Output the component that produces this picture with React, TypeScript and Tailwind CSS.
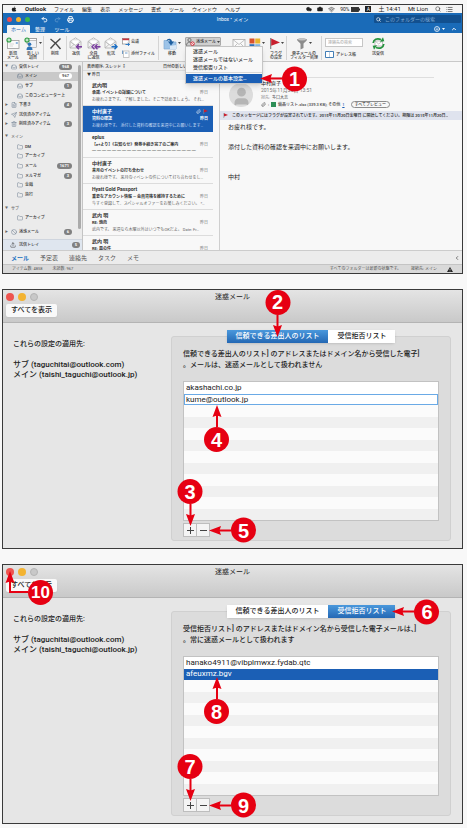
import type { ReactNode } from 'react';
import {
  Ban,
  Camera,
  ChevronLeft,
  ChevronUp,
  Cloud,
  FileText,
  Folder,
  Inbox,
  List,
  Paperclip,
  Printer,
  Redo2,
  Search,
  Send,
  Smile,
  Trash2,
  Undo2,
  Upload,
  User,
  Wifi,
} from 'lucide-react';
import { FaApple } from 'react-icons/fa';

type Direction = 'up' | 'down' | 'left';

function Badge({ n }: { n: number }) {
  return (
    <span
      className={`flex size-[25px] shrink-0 items-center justify-center rounded-full bg-[#e60012] font-['Liberation_Sans_Narrow','Liberation_Sans',sans-serif] leading-none font-bold text-white ${
        n > 9 ? 'text-[17px]' : 'text-[20px]'
      }`}
    >
      {n}
    </span>
  );
}

function Arrow({ dir }: { dir: Direction }) {
  if (dir === 'left') {
    return (
      <svg width="22" height="10" viewBox="0 0 22 10" className="shrink-0">
        <path d="M8 5H22" stroke="#e60012" strokeWidth="2" />
        <path d="M0 5L12 0.500L10.500 5L12 9.500Z" fill="#e60012" />
      </svg>
    );
  }
  return (
    <svg width="10" height="22" viewBox="0 0 10 22" className="shrink-0">
      {dir === 'down' ? (
        <>
          <path d="M5 0V14" stroke="#e60012" strokeWidth="2" />
          <path d="M5 22L0.500 10L5 11.500L9.500 10Z" fill="#e60012" />
        </>
      ) : (
        <>
          <path d="M5 8V22" stroke="#e60012" strokeWidth="2" />
          <path d="M5 0L0.500 12L5 10.500L9.500 12Z" fill="#e60012" />
        </>
      )}
    </svg>
  );
}

const calloutFlow = {
  up: 'flex-col',
  down: 'flex-col-reverse',
  left: 'flex-row',
};

// numbered step, placed over the control it points at
function Callout({ n, dir, className }: { n: number; dir: Direction; className: string }) {
  return (
    <span className={`pointer-events-none absolute z-20 flex items-center ${calloutFlow[dir]} ${className}`}>
      <Arrow dir={dir} />
      <Badge n={n} />
    </span>
  );
}

function Caret() {
  return <svg width="3" height="2" viewBox="0 0 3 2" className="shrink-0"><path d="M0 0H3L1.500 2Z" fill="#444" /></svg>;
}

function Flag({ size = 5 }: { size?: number }) {
  return (
    <svg width={size} height={size} viewBox="0 0 10 10">
      <path d="M1.500 0V10" stroke="#8d8d8d" strokeWidth="1.200" />
      <path d="M2 0.500L10 4L2 7Z" fill="#c8202f" />
    </svg>
  );
}

/* ---------- ribbon icons ---------- */

function PlusDot() {
  return (
    <g>
      <circle cx="3" cy="3" r="2.600" fill="#2f9e44" />
      <path d="M3 1.500V4.500M1.500 3H4.500" stroke="#fff" strokeWidth="0.900" />
    </g>
  );
}

function NewMailIcon() {
  return (
    <svg width="14" height="13" viewBox="0 0 14 13">
      <rect x="1.500" y="3.500" width="11.500" height="8" fill="#fafafa" stroke="#9a9a9a" strokeWidth="0.800" />
      <path d="M3.500 7H8M3.500 9H7" stroke="#c9c9c9" strokeWidth="0.700" />
      <rect x="9.800" y="5" width="2" height="2" fill="#8fb5dc" />
      <PlusDot />
    </svg>
  );
}

function NewItemIcon() {
  return (
    <svg width="14" height="13" viewBox="0 0 14 13">
      <rect x="3" y="1.500" width="9.500" height="5" fill="#fff" stroke="#8c8c8c" strokeWidth="0.800" />
      <rect x="5" y="3.500" width="7.500" height="7" fill="#eef2f7" stroke="#9a9a9a" strokeWidth="0.600" />
      <circle cx="5.500" cy="7.200" r="1.800" fill="#2b73b8" />
      <path d="M2.500 13C2.500 10.500 3.800 9.600 5.500 9.600S8.500 10.500 8.500 13Z" fill="#2b73b8" />
      <PlusDot />
    </svg>
  );
}

function DeleteIcon() {
  return (
    <svg width="13" height="13" viewBox="0 0 13 13">
      <path d="M1.500 2C5 4.500 8.500 8 11.500 12M11.500 1.500C8 4.500 4.500 8 1.500 11.500" stroke="#4a4a4a" strokeWidth="1.500" fill="none" />
    </svg>
  );
}

function OpenMail({ children }: { children: ReactNode }) {
  return (
    <svg width="14" height="13" viewBox="0 0 14 13">
      <path d="M1 4.500L6.500 0.800L12 4.500V11H1Z" fill="#f4f4f4" stroke="#b0b0b0" strokeWidth="0.800" />
      <path d="M2.800 2.800H10.200V6L6.500 8L2.800 6Z" fill="#fff" stroke="#c8c8c8" strokeWidth="0.600" />
      <path d="M1 4.500L6.500 8.500L12 4.500M1 11L5 7.500M12 11L8 7.500" fill="none" stroke="#b0b0b0" strokeWidth="0.700" />
      {children}
    </svg>
  );
}

function ReplyIcon() {
  return (
    <OpenMail>
      <path d="M7.500 9.800H13M10 7.300L7.500 9.800L10 12.300" fill="none" stroke="#7b3fa0" strokeWidth="1.500" />
    </OpenMail>
  );
}

function ReplyAllIcon() {
  return (
    <OpenMail>
      <path d="M8.500 9.800H13.500M10.500 7.300L8 9.800L10.500 12.300M7.500 7.300L5 9.800L7.500 12.300" fill="none" stroke="#7b3fa0" strokeWidth="1.400" />
    </OpenMail>
  );
}

function ForwardIcon() {
  return (
    <OpenMail>
      <path d="M7.500 9.800H13M10.500 7.300L13 9.800L10.500 12.300" fill="none" stroke="#1c6fc4" strokeWidth="1.500" />
    </OpenMail>
  );
}

function MeetingIcon() {
  return (
    <svg width="8" height="8" viewBox="0 0 8 8" className="shrink-0">
      <rect x="0.500" y="0.500" width="6.500" height="5.500" fill="#fff" stroke="#8a8a8a" strokeWidth="0.700" />
      <rect x="0.500" y="0.500" width="6.500" height="1.700" fill="#c8323c" />
      <path d="M3.500 6.500H7.500M5.800 5L7.500 6.500L5.800 8" fill="none" stroke="#1c6fc4" strokeWidth="0.900" />
    </svg>
  );
}

function AttachIcon() {
  return (
    <svg width="8" height="8" viewBox="0 0 8 8" className="shrink-0">
      <rect x="1.500" y="1" width="5.500" height="6.500" fill="#fff" stroke="#b0b0b0" strokeWidth="0.700" />
      <path d="M0.500 0.500V4M3 3H5.500" stroke="#4f86bd" strokeWidth="0.800" />
    </svg>
  );
}

function MoveIcon() {
  return (
    <svg width="14" height="13" viewBox="0 0 14 13">
      <path d="M1 3.500H5L6.500 5H13V12H1Z" fill="#9cc3e8" stroke="#7fabd4" strokeWidth="0.700" />
      <path d="M7 12H13V8L7 9Z" fill="#d9e8f6" />
      <path d="M3.500 4C4 1.200 8.500 0.500 9 4.500H11L8 8.500L5 4.500H7C6.700 2.800 5 2.800 3.500 4Z" fill="#1f5f9f" />
    </svg>
  );
}

function JunkIcon() {
  return (
    <svg width="9" height="8" viewBox="0 0 9 8" className="shrink-0">
      <circle cx="3.500" cy="2" r="1.600" fill="none" stroke="#555" strokeWidth="0.700" />
      <path d="M0.500 7.500C0.500 5 2 4.200 3.500 4.200C4.500 4.200 5.300 4.500 5.800 5" fill="none" stroke="#555" strokeWidth="0.700" />
      <circle cx="6.500" cy="5.700" r="1.800" fill="#fff" stroke="#cf2331" strokeWidth="0.900" />
      <path d="M5.300 4.500L7.700 6.900" stroke="#cf2331" strokeWidth="0.800" />
    </svg>
  );
}

function ClosedMailIcon() {
  return (
    <svg width="14" height="13" viewBox="0 0 14 13">
      <rect x="1" y="2.500" width="12" height="8.500" fill="#fafafa" stroke="#ababab" strokeWidth="0.800" />
      <path d="M1 2.500L7 7.500L13 2.500M1 11L5.500 6.500M13 11L8.500 6.500" fill="none" stroke="#ababab" strokeWidth="0.700" />
    </svg>
  );
}

function CategoryIcon() {
  return (
    <svg width="12" height="13" viewBox="0 0 12 13">
      <rect x="0.500" y="1.500" width="5" height="5" fill="#d9532c" />
      <rect x="6.200" y="1.500" width="5" height="5" fill="#e9b32d" />
      <rect x="0.500" y="7.200" width="5" height="5" fill="#2c6fb8" />
      <rect x="6.200" y="7.200" width="5" height="5" fill="#7fb2e0" />
    </svg>
  );
}

function FunnelIcon() {
  return (
    <svg width="12" height="13" viewBox="0 0 12 13">
      <path d="M1 2.500C1 1 11 1 11 2.500C11 4 7.500 6 7.500 7V11L4.500 12.500V7C4.500 6 1 4 1 2.500Z" fill="#8b8b8b" />
      <ellipse cx="6" cy="2.600" rx="4" ry="0.900" fill="#c4c4c4" />
    </svg>
  );
}

function BookIcon() {
  return (
    <svg width="9" height="7" viewBox="0 0 9 7" className="shrink-0">
      <path d="M0.500 0.500H8.500V6.500H0.500Z" fill="#fff" stroke="#2e6fae" strokeWidth="0.900" />
      <path d="M4.500 0.500V6" stroke="#9db9d5" strokeWidth="0.700" />
    </svg>
  );
}

function SyncIcon() {
  return (
    <svg width="13" height="13" viewBox="0 0 13 13">
      <rect x="3" y="4" width="7.500" height="5" fill="#fff" stroke="#a5a5a5" strokeWidth="0.700" />
      <path d="M3 4L6.700 7L10.500 4" fill="none" stroke="#a5a5a5" strokeWidth="0.600" />
      <path d="M1.200 6C1.500 2.500 5 0.800 9 2.500" fill="none" stroke="#23933d" strokeWidth="1.700" />
      <path d="M8 4.800L12.300 4.300L11 0.200Z" fill="#23933d" />
      <path d="M11.800 7C11.500 10.500 8 12.200 4 10.500" fill="none" stroke="#23933d" strokeWidth="1.700" />
      <path d="M5 8.200L0.700 8.700L2 12.800Z" fill="#23933d" />
    </svg>
  );
}

function RibbonButton({ icon, label, className, caret }: { icon: ReactNode; label: string[]; className: string; caret?: boolean }) {
  return (
    <button type="button" className={`flex shrink-0 flex-col items-center whitespace-nowrap ${className}`}>
      <span className="flex h-[14px] items-center gap-px">
        {icon}
        {caret && <Caret />}
      </span>
      <span className="mt-[2px] h-[8px] leading-[4px]">
        {label.map(line => (
          <span key={line} className="block">{line}</span>
        ))}
      </span>
    </button>
  );
}

function Separator() {
  return <span className="h-[24px] w-px shrink-0 bg-[#d4d4d4]" />;
}

/* ---------- mail window ---------- */

const menus = ['ファイル', '編集', '表示', 'メッセージ', '書式', 'ツール', 'ウインドウ', 'ヘルプ'];
const junkItems = ['迷惑メール', '迷惑メールではないメール', '受信拒否リスト'];

function MenuBar() {
  return (
    <div className="flex h-[8px] items-center justify-between bg-[#f4f4f4] pr-[9px] pl-[8px] text-[5px] leading-[8px] whitespace-nowrap text-[#222]">
      <div className="flex items-center gap-[8px]">
        <FaApple size={6} />
        <span className="text-[6px] font-bold">Outlook</span>
        {menus.map(m => <span key={m}>{m}</span>)}
      </div>
      <div className="flex items-center gap-[5px]">
        <Cloud size={6} fill="#222" />
        <Camera size={6} fill="#222" />
        <Wifi size={7} />
        <span className="flex items-center gap-[2px]">
          90%
          <svg width="9" height="5" viewBox="0 0 9 5">
            <rect x="0.500" y="0.500" width="7" height="4" fill="#333" stroke="#222" strokeWidth="0.800" />
            <path d="M8.500 1.500V3.500" stroke="#222" />
          </svg>
        </span>
        <span className="flex size-[6px] items-center justify-center bg-[#222] text-[5px] leading-none text-white">A</span>
        <span className="ml-[2px] text-[6px]">土 14:41</span>
        <span className="ml-[2px] text-[6px]">Mt Lion</span>
        <Search size={6} className="ml-[2px]" />
        <List size={7} />
      </div>
    </div>
  );
}

function TitleBar() {
  return (
    <div className="h-[20px] bg-[#1a6bb8] text-white">
      <div className="grid h-[12px] grid-cols-[1fr_auto_1fr] items-center text-[5px]">
        <div className="flex items-center gap-[4px] pl-[4px]">
          <span className="size-[5px] rounded-full bg-[#ee4b4b]" />
          <span className="size-[5px] rounded-full bg-[#f5b12e]" />
          <span className="size-[5px] rounded-full bg-[#39b54a]" />
          <Undo2 size={7} strokeWidth={3} className="ml-[7px]" />
          <Redo2 size={7} className="ml-[2px] opacity-40" />
          <Printer size={7} strokeWidth={3} className="ml-[2px]" />
        </div>
        <span className="leading-none">Inbox • メイン</span>
        <label className="mr-px flex h-[8px] w-[87px] items-center gap-[4px] justify-self-end rounded-[1px] bg-[#12508f] px-[2px]">
          <Search size={5} strokeWidth={3} />
          <input
            aria-label="フォルダーの検索"
            placeholder="このフォルダーの検索"
            className="min-w-0 flex-1 leading-none outline-none placeholder:text-[#7fa9d4]"
          />
        </label>
      </div>
      <div className="flex h-[8px] items-center justify-between pl-[4px] text-[5px] leading-[8px]">
        <div className="flex">
          <button type="button" className="w-[23px] rounded-t-[1px] bg-[#f4f4f4] text-[#1a6bb8]">ホーム</button>
          <button type="button" className="w-[20px]">整理</button>
          <button type="button" className="ml-[2px] w-[20px]">ツール</button>
        </div>
        <div className="flex items-center gap-[6px] pr-[5px]">
          <span className="flex items-center gap-[2px]">
            <Smile size={6} strokeWidth={3} />
            <svg width="3" height="2" viewBox="0 0 3 2"><path d="M0 0H3L1.500 2Z" fill="#fff" /></svg>
          </span>
          <ChevronUp size={6} strokeWidth={4} />
        </div>
      </div>
    </div>
  );
}

function JunkMenu() {
  return (
    <div className="relative w-[36px] shrink-0 self-start pt-[2px]">
      <button type="button" className="flex h-[9px] w-full items-center justify-center gap-px rounded-[1px] border border-[#a9a9a9] bg-[#cfcfcf] whitespace-nowrap">
        <JunkIcon />
        迷惑メール
        <Caret />
      </button>
      <div className="absolute top-full left-0 z-10 w-[78px] border border-[#c6c6c6] bg-[#f8f8f8] text-[5px] leading-[8px] whitespace-nowrap shadow-md">
        {junkItems.map(item => (
          <button key={item} type="button" className="block w-full pl-[7px] text-left">{item}</button>
        ))}
        <div className="my-px h-px bg-[#d8d8d8]" />
        <div className="relative">
          <button type="button" className="block w-full bg-[#1b5fb5] pl-[7px] text-left leading-[9px] text-white">
            迷惑メールの基本設定…
          </button>
          <Callout n={1} dir="left" className="top-1/2 left-full -ml-[2px] -translate-y-1/2" />
        </div>
      </div>
    </div>
  );
}

function Ribbon() {
  return (
    <div className="flex h-[29px] items-center border-b border-[#c9c9c9] bg-[#f4f4f4] pt-[2px] text-[4px] leading-[4px] font-medium text-[#333]">
      <RibbonButton icon={<NewMailIcon />} label={['新規', 'メール']} className="w-[20px]" />
      <RibbonButton icon={<NewItemIcon />} label={['新しい', '項目']} className="w-[20px]" caret />
      <Separator />
      <RibbonButton icon={<DeleteIcon />} label={['削除']} className="w-[22px]" />
      <Separator />
      <RibbonButton icon={<ReplyIcon />} label={['返信']} className="w-[18px]" />
      <RibbonButton icon={<ReplyAllIcon />} label={['全員', 'に返信']} className="w-[17px]" />
      <RibbonButton icon={<ForwardIcon />} label={['転送']} className="w-[18px]" />
      <div className="flex w-[38px] shrink-0 flex-col gap-[4px] pl-[2px]">
        <button type="button" className="flex items-center gap-px"><MeetingIcon />会議</button>
        <button type="button" className="flex items-center gap-px whitespace-nowrap"><AttachIcon />添付ファイル</button>
      </div>
      <Separator />
      <RibbonButton icon={<MoveIcon />} label={['移動']} className="w-[26px]" caret />
      <JunkMenu />
      <div className="ml-[8px] flex">
        <RibbonButton icon={<ClosedMailIcon />} label={['未読']} className="w-[19px]" />
        <RibbonButton icon={<CategoryIcon />} label={['分類']} className="w-[18px]" caret />
        <RibbonButton icon={<Flag size={11} />} label={['フラグ', 'の設定']} className="w-[20px]" caret />
      </div>
      <Separator />
      <RibbonButton icon={<FunnelIcon />} label={['電子メールの', 'フィルター処理']} className="w-[34px]" caret />
      <Separator />
      <div className="ml-[3px] flex w-[38px] shrink-0 flex-col gap-[4px]">
        <input
          aria-label="連絡先の検索"
          placeholder="連絡先の検索"
          className="h-[9px] w-full border border-[#c6c6c6] bg-white px-[2px] leading-none outline-none placeholder:text-[#b5b5b5]"
        />
        <button type="button" className="flex items-center gap-[2px] whitespace-nowrap"><BookIcon />アドレス帳</button>
      </div>
      <RibbonButton icon={<SyncIcon />} label={['送受信']} className="w-[30px]" />
    </div>
  );
}

type FolderRow = {
  label: string;
  icon?: ReactNode;
  arrow?: '▼' | '▶';
  count?: string;
  nested?: boolean;
  selected?: boolean;
};

const folderIcon = <Folder size={6} />;
const inboxIcon = <Inbox size={6} />;

const folderGroups: { height: string; rows: FolderRow[] }[] = [
  {
    height: 'h-[67px]',
    rows: [
      { label: '受信トレイ', icon: inboxIcon, arrow: '▼', count: '968' },
      { label: 'メイン', icon: inboxIcon, nested: true, count: '967', selected: true },
      { label: 'サブ', icon: inboxIcon, nested: true, count: '1' },
      { label: 'このコンピューター上', icon: inboxIcon, nested: true },
      { label: '下書き', icon: <FileText size={6} />, arrow: '▶', count: '4' },
      { label: '送信済みアイテム', icon: <Send size={6} />, arrow: '▶' },
      { label: '削除済みアイテム', icon: <Trash2 size={6} />, arrow: '▶', count: '3' },
    ],
  },
  {
    height: 'mt-[3px] h-[68px]',
    rows: [
      { label: 'メイン', arrow: '▼' },
      { label: 'DM', icon: folderIcon, nested: true },
      { label: 'アーカイブ', icon: folderIcon, nested: true },
      { label: 'メール', icon: folderIcon, nested: true, count: '1671' },
      { label: 'メルマガ', icon: folderIcon, nested: true, count: '3' },
      { label: '金融', icon: folderIcon, nested: true },
      { label: '旅行', icon: folderIcon, nested: true },
    ],
  },
  {
    height: 'mt-[4px] h-[19px]',
    rows: [
      { label: 'サブ', arrow: '▼' },
      { label: 'アーカイブ', icon: folderIcon, nested: true },
    ],
  },
  {
    height: 'mt-[4px] h-[10px]',
    rows: [{ label: '迷惑メール', icon: <Ban size={6} />, arrow: '▶', count: '6' }],
  },
];

function FolderItem({ row }: { row: FolderRow }) {
  return (
    <div className={`flex min-h-0 flex-1 items-center gap-[2px] pl-[2px] ${row.selected ? 'bg-[#c9c9c9]' : ''}`}>
      <span className="w-[4px] text-[3px] text-[#666]">{row.arrow}</span>
      {row.nested && <span className="w-[4px]" />}
      {row.icon && <span className="text-[#6f7f90]">{row.icon}</span>}
      <span className={`flex-1 whitespace-nowrap ${row.icon ? '' : 'text-[#777]'}`}>{row.label}</span>
      {row.count && (
        <span className={`mr-[6px] rounded-full px-[3px] leading-[6px] font-bold ${row.selected ? 'bg-white text-[#555]' : 'bg-[#808080] text-white'}`}>
          {row.count}
        </span>
      )}
    </div>
  );
}

function Sidebar() {
  return (
    <div className="flex w-[80px] shrink-0 flex-col justify-between border-r border-[#c4c4c4] bg-[#ebebeb] text-[4px] leading-none font-medium text-[#333]">
      <div className="flex">
        <div className="min-w-0 flex-1">
          {folderGroups.map((group, i) => (
            <div key={i} className={`flex flex-col ${group.height}`}>
              {group.rows.map(row => <FolderItem key={row.label} row={row} />)}
            </div>
          ))}
        </div>
        <div className="mt-[3px] mr-px h-[164px] w-[3px] rounded-full bg-[#ababab]" />
      </div>
      <div className="flex h-[11px] items-center gap-[3px] border-t border-[#cfd5de] bg-[#dfe6ef] pr-[2px] pl-[7px]">
        <Upload size={6} />
        <span className="flex-1">送信トレイ</span>
        <span className="rounded-full bg-[#808080] px-[3px] leading-[6px] font-bold text-white">5</span>
      </div>
    </div>
  );
}

type Message = { from: string; subject: string; preview?: string; selected?: boolean };

const messages: Message[] = [
  { from: '武内明', subject: '承諾: イベントの詳細について', preview: 'お疲れさまです。 了解しました。そこで詰めましょう。 それ…' },
  { from: '中村直子', subject: '資料の確認', preview: 'お疲れ様です。 添付した資料の確認を来週中にお願いします…', selected: true },
  { from: 'eplus', subject: '【e+より】《お知らせ》発券手続き完了のご案内', preview: '━ ━ ━ ━ ━ ━ ━ ━ ━ ━ ━ ━ ━ ━ ━ ━ ━ ━ ━ ━ ━' },
  { from: '中村直子', subject: '来月のイベントの打ち合わせ', preview: 'お疲れ様です。 来月のイベントの件について打ち合わせをし…' },
  { from: 'Hyatt Gold Passport', subject: '重要なアカウント情報 — 会員資格を維持するために', preview: '今すぐ登録して、スペシャルオファーをお楽しみください。 *…' },
  { from: '武内 明', subject: 'RE: 焼肉', preview: '武内です。 来週なら木曜以外はいつでもOKだよ。 Date: Fr…' },
  { from: '武内 明', subject: 'RE: 皿の件' },
];

function MessageList() {
  return (
    <div className="flex w-[137px] shrink-0 flex-col overflow-hidden border-r border-[#cfcfcf] bg-[#f8f8f8] pr-[6px] text-[4px] leading-[7px] whitespace-nowrap text-[#333]">
      <div className="flex h-[9px] shrink-0 items-center justify-between border-b border-[#dadada] bg-[#ececec] pr-[22px] pl-[4px] font-medium">
        <span>表示順序: スレッド ↕</span>
        <span>日付の新しい順</span>
      </div>
      <div className="h-[9px] shrink-0 bg-[#efefef] pl-[4px] font-medium">▼ 昨日</div>
      {messages.map((m, i) => (
        <div
          key={i}
          className={`shrink-0 border-b pt-[2px] pr-[5px] pb-[2px] pl-[9px] last:border-b-0 last:pb-0 ${
            m.selected ? 'border-[#1b5fb5] bg-[#1b5fb5] text-white' : 'border-[#dcdcdc]'
          }`}
        >
          <div className="flex items-center justify-between text-[5px] font-bold">
            {m.from}
            {m.selected && <span className="flex gap-[2px]"><Paperclip size={5} /><Flag /></span>}
          </div>
          <div className="flex justify-between font-bold">
            <span>{m.subject}</span>
            <span className={m.selected ? '' : 'font-normal text-[#777]'}>昨日</span>
          </div>
          {m.preview && <div className={m.selected ? 'text-[#c9dcf3]' : 'text-[#666]'}>{m.preview}</div>}
        </div>
      ))}
    </div>
  );
}

function ReadingPane() {
  return (
    <div className="min-w-0 flex-1 bg-[#f8f8f8] text-[4px] leading-[7px] text-[#444]">
      <div className="mr-[28px] ml-[9px] h-[16px] border-b border-[#dedede]" />
      <div className="flex h-[33px] gap-[8px] pl-[9px]">
        <span className="mt-[5px] flex size-[24px] shrink-0 items-end justify-center overflow-hidden rounded-full bg-[#dcdcdc] text-[#b5b5b5]">
          <User size={21} fill="currentColor" />
        </span>
        <div className="pt-[2px] whitespace-nowrap">
          <div className="text-[5px] text-[#222]">中村直子</div>
          <div className="text-[5px] text-[#777]">2015年11月20日 13:51</div>
          <div><span className="text-[#888]">宛先:</span>&nbsp; 多口大志</div>
          <div className="flex items-center gap-[2px] font-medium">
            <Paperclip size={5} />:
            <span className="size-[5px] bg-[#2f8f57]" />
            備品リスト.xlsx (339.3 KB); その他
            <a href="#attachments" className="text-[#1b5fb5] underline">1</a>
            <button type="button" className="ml-[4px] rounded-full border border-[#8c8c8c] px-[3px] leading-[5px]">すべてプレビュー</button>
          </div>
        </div>
      </div>
      <div className="flex h-[9px] items-center gap-[4px] bg-[#dfe3ee] px-[3px]">
        <Flag />
        <span className="truncate font-medium text-[#222]">
          このメッセージにはフラグが設定されています。2015年11月20日金曜日 に開始してください。期限は 2015年11月20日…
        </span>
      </div>
      <div className="px-[8px] pt-[2px] text-[6px] leading-[10px] text-[#222]">
        <p>お疲れ様です。</p>
        <br />
        <p>添付した資料の確認を来週中にお願いします。</p>
        <br />
        <br />
        <p>中村</p>
      </div>
    </div>
  );
}

function MailWindow() {
  return (
    <section className="border border-[#3a3a3a]">
      <MenuBar />
      <TitleBar />
      <Ribbon />
      <div className="flex h-[188px]">
        <Sidebar />
        <MessageList />
        <ReadingPane />
      </div>
      <nav className="flex h-[14px] items-center gap-[11px] border-t border-[#cccccc] bg-[#ececec] px-[8px] text-[6px] text-[#555]">
        <button type="button" className="font-bold text-[#1b6fc0]">メール</button>
        <button type="button">予定表</button>
        <button type="button">連絡先</button>
        <button type="button">タスク</button>
        <button type="button">メモ</button>
        <ChevronLeft size={6} strokeWidth={3} className="-mr-[6px] ml-auto" />
      </nav>
      <div className="flex h-[9px] items-center gap-[10px] border-t border-[#c4c4c4] bg-[#d9d9d9] px-[9px] text-[4px] leading-none text-[#555]">
        <span>アイテム数: 4858</span>
        <span>未読数: 967</span>
        <span className="ml-auto">すべてのフォルダーは最新の状態です。</span>
        <span>接続先: メイン</span>
        <svg width="6" height="5" viewBox="0 0 12 10">
          <path d="M6 0L12 10H0Z" fill="#222" />
          <path d="M6 3.500V6.500M6 7.500V8.800" stroke="#fff" strokeWidth="1.200" />
        </svg>
      </div>
    </section>
  );
}

/* ---------- junk mail preferences ---------- */

type PrefsProps = {
  active: 'safe' | 'blocked';
  description: string[];
  steps: { tab: number; add: number; remove: number; close?: number };
  rows: ReactNode;
};

function TabButton({ active, children }: { active: boolean; children: ReactNode }) {
  return (
    <button
      type="button"
      role="tab"
      aria-selected={active}
      className={`h-[13px] px-[9px] whitespace-nowrap ${active ? 'bg-linear-to-b from-[#4a98dc] to-[#2468b4] text-white' : 'bg-white text-[#222]'}`}
    >
      {children}
    </button>
  );
}

function PrefsWindow({ active, description, steps, rows }: PrefsProps) {
  return (
    <section className="border border-[#3a3a3a] bg-[#e6e6e6] text-[7px] font-medium text-[#222]">
      <header className="h-[33px] border-b border-[#b4b4b4] bg-linear-to-b from-[#e4e4e4] to-[#c9c9c9]">
        <div className="grid h-[14px] grid-cols-[1fr_auto_1fr] items-center">
          <div className="flex gap-[4px] pl-[3px]">
            <span className="relative size-[8px] rounded-full bg-[#ee544f]">
              {steps.close && (
                <span className="pointer-events-none absolute top-[3px] left-0 z-20 flex items-end">
                  <svg width="22" height="34" viewBox="0 0 22 34" className="shrink-0 overflow-visible">
                    <path d="M4 8V21H22" fill="none" stroke="#e60012" strokeWidth="2" />
                    <path d="M4 0L-0.500 12L4 10.500L8.500 12Z" fill="#e60012" />
                  </svg>
                  <Badge n={steps.close} />
                </span>
              )}
            </span>
            <span className="size-[8px] rounded-full bg-[#f3b331]" />
            <span className="size-[8px] rounded-full border border-[#b4b4b4] bg-[#c8c8c8]" />
          </div>
          <h2 className="font-normal">迷惑メール</h2>
        </div>
        <button type="button" className="ml-[3px] h-[13px] rounded-[2px] bg-[#f9f9f9] px-[5px] shadow-xs">すべてを表示</button>
      </header>
      <div className="flex pt-[7px] pr-[11px] pb-[7px]">
        <div className="w-[168px] shrink-0 pt-[9px] pl-[10px] leading-[10px] whitespace-nowrap">
          <p>これらの設定の適用先:</p>
          <p className="mt-[11px] text-[8px]">サブ (taguchitai@outlook.com)</p>
          <p className="text-[8px]">メイン (taishi_taguchi@outlook.jp)</p>
        </div>
        <div className="min-w-0 flex-1">
          <div className="relative z-10 flex justify-center">
            <div role="tablist" className="flex rounded-[3px] shadow-sm">
              <div className="relative flex">
                <TabButton active={active === 'safe'}>信頼できる差出人のリスト</TabButton>
                {active === 'safe' && <Callout n={steps.tab} dir="down" className="bottom-1/2 left-1/2 -translate-x-1/2" />}
              </div>
              <div className="relative flex">
                <TabButton active={active === 'blocked'}>受信拒否リスト</TabButton>
                {active === 'blocked' && <Callout n={steps.tab} dir="left" className="top-1/2 left-full -ml-[3px] -translate-y-1/2" />}
              </div>
            </div>
          </div>
          <div className="-mt-[7px] rounded-[3px] border border-[#d0d0d0] bg-[#dcdcdc] px-[11px] pt-[12px] pb-[3px]">
            {description.map(line => (
              <p key={line} className="leading-[11px] whitespace-nowrap">{line}</p>
            ))}
            <div className="mt-[10px] grid h-[140px] grid-rows-12 border border-[#c2c2c2] bg-white text-[8px] leading-none font-normal">
              {rows}
              {Array.from({ length: 10 }, (_, i) => (
                <div key={i} className="odd:bg-[#fbfbfb] even:bg-[#f0f0f0]" />
              ))}
            </div>
            <div className="mt-[2px] flex">
              <div className="relative">
                <button type="button" aria-label="追加" className="flex size-[14px] items-center justify-center border border-[#bdbdbd] bg-[#f4f4f4]">
                  <svg width="7" height="7" viewBox="0 0 7 7"><path d="M3.500 0V7M0 3.500H7" stroke="#444" /></svg>
                </button>
                <Callout n={steps.add} dir="down" className="bottom-full left-1/2 -mb-[3px] -translate-x-1/2" />
              </div>
              <div className="relative -ml-px">
                <button type="button" aria-label="削除" className="flex size-[14px] items-center justify-center border border-[#bdbdbd] bg-[#f4f4f4]">
                  <svg width="7" height="7" viewBox="0 0 7 7"><path d="M0 3.500H7" stroke="#444" /></svg>
                </button>
                <Callout n={steps.remove} dir="left" className="top-1/2 left-full -ml-px -translate-y-1/2" />
              </div>
            </div>
          </div>
        </div>
      </div>
    </section>
  );
}

export default function App() {
  return (
    <main className="flex min-h-screen flex-col gap-[15px] bg-[#f8f8f8] pt-[4px] pr-[4px] pb-[4px] pl-[2px] font-['Roboto','Noto_Sans_CJK_JP',sans-serif]">
      <MailWindow />
      <PrefsWindow
        active="safe"
        description={[
          '信頼できる差出人のリスト] のアドレスまたはドメイン名から受信した電子]',
          '。メールは、迷惑メールとして扱われません',
        ]}
        steps={{ tab: 2, add: 3, remove: 5 }}
        rows={
          <>
            <div className="flex items-center pl-[2px]">akashachi.co.jp</div>
            <div className="relative">
              <input
                aria-label="差出人のアドレス"
                defaultValue="kume@outlook.jp"
                className="block size-full border border-[#6aaae6] bg-white pl-px outline-none"
              />
              <Callout n={4} dir="up" className="top-full left-[20px]" />
            </div>
          </>
        }
      />
      <PrefsWindow
        active="blocked"
        description={[
          '受信拒否リスト] のアドレスまたはドメイン名から受信した電子メールは、]',
          '。常に迷惑メールとして扱われます',
        ]}
        steps={{ tab: 6, add: 7, remove: 9, close: 10 }}
        rows={
          <>
            <div className="flex items-center pl-[2px]">hanako4911@vibplmwxz.fydab.qtc</div>
            <div className="relative flex items-center bg-[#1b5fb5] pl-[2px] text-white">
              afeuxmz.bgv
              <Callout n={8} dir="up" className="top-full left-[20px] -mt-[3px]" />
            </div>
          </>
        }
      />
    </main>
  );
}
